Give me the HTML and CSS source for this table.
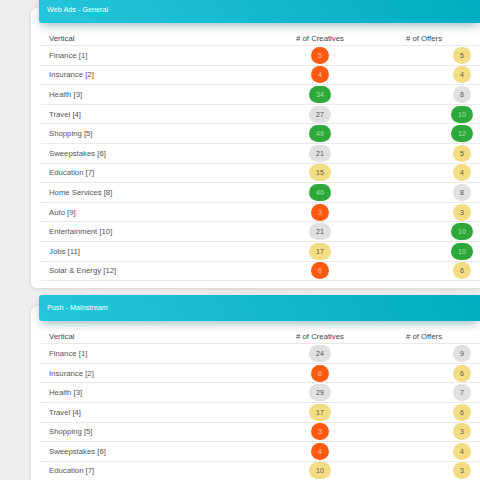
FILE: index.html
```html
<!DOCTYPE html>
<html lang="en">
<head>
  <meta charset="UTF-8" />
  <title>Verticals</title>
  <link rel="stylesheet" href="styles.css">
</head>
<body>

<div class="page">

  <div class="card">
    <div class="card-header">Web Ads - General</div>
    <div class="row head">
      <span class="vertical">Vertical</span>
      <span class="col-creatives">&#35; of Creatives</span>
      <span class="col-offers">&#35; of Offers</span>
    </div>
    <div class="row"><span class="vertical">Finance [1]</span><span class="cell-c"><b class="badge orange">5</b></span><span class="cell-o"><b class="badge yellow">5</b></span></div>
    <div class="row"><span class="vertical">Insurance [2]</span><span class="cell-c"><b class="badge orange">4</b></span><span class="cell-o"><b class="badge yellow">4</b></span></div>
    <div class="row"><span class="vertical">Health [3]</span><span class="cell-c"><b class="badge green">34</b></span><span class="cell-o"><b class="badge gray">8</b></span></div>
    <div class="row"><span class="vertical">Travel [4]</span><span class="cell-c"><b class="badge gray">27</b></span><span class="cell-o"><b class="badge green">10</b></span></div>
    <div class="row"><span class="vertical">Shopping [5]</span><span class="cell-c"><b class="badge green">49</b></span><span class="cell-o"><b class="badge green">12</b></span></div>
    <div class="row"><span class="vertical">Sweepstakes [6]</span><span class="cell-c"><b class="badge gray">21</b></span><span class="cell-o"><b class="badge yellow">5</b></span></div>
    <div class="row"><span class="vertical">Education [7]</span><span class="cell-c"><b class="badge yellow">15</b></span><span class="cell-o"><b class="badge yellow">4</b></span></div>
    <div class="row"><span class="vertical">Home Services [8]</span><span class="cell-c"><b class="badge green">40</b></span><span class="cell-o"><b class="badge gray">8</b></span></div>
    <div class="row"><span class="vertical">Auto [9]</span><span class="cell-c"><b class="badge orange">3</b></span><span class="cell-o"><b class="badge yellow">3</b></span></div>
    <div class="row"><span class="vertical">Entertainment [10]</span><span class="cell-c"><b class="badge gray">21</b></span><span class="cell-o"><b class="badge green">10</b></span></div>
    <div class="row"><span class="vertical">Jobs [11]</span><span class="cell-c"><b class="badge yellow">17</b></span><span class="cell-o"><b class="badge green">10</b></span></div>
    <div class="row"><span class="vertical">Solar &amp; Energy [12]</span><span class="cell-c"><b class="badge orange">6</b></span><span class="cell-o"><b class="badge yellow">6</b></span></div>
  </div>

  <div class="card">
    <div class="card-header">Push - Mainstream</div>
    <div class="row head">
      <span class="vertical">Vertical</span>
      <span class="col-creatives">&#35; of Creatives</span>
      <span class="col-offers">&#35; of Offers</span>
    </div>
    <div class="row"><span class="vertical">Finance [1]</span><span class="cell-c"><b class="badge gray">24</b></span><span class="cell-o"><b class="badge gray">9</b></span></div>
    <div class="row"><span class="vertical">Insurance [2]</span><span class="cell-c"><b class="badge orange">6</b></span><span class="cell-o"><b class="badge yellow">6</b></span></div>
    <div class="row"><span class="vertical">Health [3]</span><span class="cell-c"><b class="badge gray">29</b></span><span class="cell-o"><b class="badge gray">7</b></span></div>
    <div class="row"><span class="vertical">Travel [4]</span><span class="cell-c"><b class="badge yellow">17</b></span><span class="cell-o"><b class="badge yellow">6</b></span></div>
    <div class="row"><span class="vertical">Shopping [5]</span><span class="cell-c"><b class="badge orange">3</b></span><span class="cell-o"><b class="badge yellow">3</b></span></div>
    <div class="row"><span class="vertical">Sweepstakes [6]</span><span class="cell-c"><b class="badge orange">4</b></span><span class="cell-o"><b class="badge yellow">4</b></span></div>
    <div class="row"><span class="vertical">Education [7]</span><span class="cell-c"><b class="badge yellow">10</b></span><span class="cell-o"><b class="badge yellow">3</b></span></div>
  </div>

</div>

</body>
</html>
```

FILE: styles.css
```css
* { box-sizing: border-box; margin: 0; padding: 0; }
body {
  background-color: #eeeeee;
  font-family: "Liberation Sans", Arial, sans-serif;
  color: #555;
}
.page {
  width: 480px;
  height: 480px;
  overflow: hidden;
  padding: 8px 0 0 31px;
}
.card {
  display: flex;
  flex-direction: column;
  background: #fff;
  border-radius: 6px 0 0 6px;
  box-shadow: 0 1px 4px rgba(0, 0, 0, 0.12);
  padding: 0 0 7px 10px;
  margin-bottom: 18px;
}
.card-header {
  margin: -11px 0 0 -2px;
  height: 26px;
  line-height: 26px;
  padding-left: 8px;
  font-size: 7.25px;
  color: #fff;
  border-radius: 3px 0 0 3px;
  background: linear-gradient(60deg, #26c6da, #00acc1);
  box-shadow: 0 4px 10px rgba(0, 0, 0, 0.14), 0 5px 8px -4px rgba(0, 172, 193, 0.35);
}
.row {
  display: grid;
  grid-template-columns: 239px 80px 76px 1fr;
  align-items: center;
  height: 19.6px;
  border-bottom: 1px solid #e9e9e9;
  font-size: 7.75px;
}
.row.head {
  height: 23px;
  align-items: start;
  padding-top: 9px;
  line-height: 14px;
  color: #444;
}
.vertical {
  padding-left: 8px;
  white-space: nowrap;
}
.col-creatives {
  text-align: center;
  white-space: nowrap;
}
.col-offers {
  grid-column: 3 / span 2;
  padding-left: 8px;
  text-align: center;
  white-space: nowrap;
}
.cell-c, .cell-o {
  display: flex;
  justify-content: center;
}
.cell-o {
  grid-column: 4;
  padding-left: 8px;
}
.badge {
  display: inline-block;
  min-width: 17px;
  height: 17px;
  line-height: 17px;
  padding: 0 7px;
  border-radius: 9px;
  font-size: 7px;
  font-weight: normal;
  text-align: center;
}
.badge.orange {
  background: #ff5a0f;
  color: #ffc4a6;
}
.badge.green {
  background: #2ea83a;
  color: #a9e3a4;
}
.badge.yellow {
  background: #f3dc84;
  color: #5e5a48;
}
.badge.gray {
  background: #e0e0e0;
  color: #555;
}
```
